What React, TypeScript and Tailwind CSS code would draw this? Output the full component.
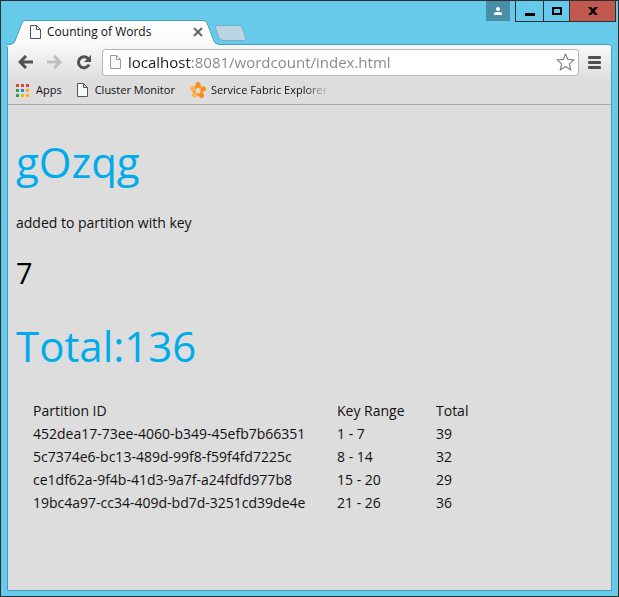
import React from "react";

const rows = [
  ["452dea17-73ee-4060-b349-45efb7b66351", "1 - 7", "39"],
  ["5c7374e6-bc13-489d-99f8-f59f4fd7225c", "8 - 14", "32"],
  ["ce1df62a-9f4b-41d3-9a7f-a24fdfd977b8", "15 - 20", "29"],
  ["19bc4a97-cc34-409d-bd7d-3251cd39de4e", "21 - 26", "36"],
];

const appColours = ["#e84235", "#e84235", "#e84235", "#2ba24c", "#1a86f0", "#fbb40a", "#2ba24c", "#fbb40a", "#fbb40a"];

function PageIcon({ stroke }: { stroke: string }) {
  return (
    <svg width="11" height="14" viewBox="0 0 11 14" fill="#f8f8f8" stroke={stroke} className="shrink-0" aria-hidden="true">
      <path d="M.5.5h6l4 4v9H.5zM6.5.5v4h4" />
    </svg>
  );
}

function TitleBar() {
  return (
    <header className="flex h-[43px] items-start justify-between pl-[6px] pr-[2px]">
      <div className="flex self-end">
        <div className="relative flex h-6 w-[212px] items-center pl-[23px] pr-[16px]">
          <svg className="absolute left-0 top-0" width="212" height="26" viewBox="0 0 212 26" aria-hidden="true">
            <defs>
              <linearGradient id="tab" x1="0" y1="0" x2="0" y2="1">
                <stop offset="0" stopColor="#ffffff" />
                <stop offset="1" stopColor="#f8f8f8" />
              </linearGradient>
            </defs>
            <path
              d="M0 26V24.500H3Q7 24 8 21L15 3Q16 .5 19 .5H196Q199 .5 200 3L207 21Q208 24 212 24.500V26Z"
              fill="url(#tab)"
            />
            <path
              d="M0 24.500H3Q7 24 8 21L15 3Q16 .5 19 .5H196Q199 .5 200 3L207 21Q208 24 212 24.500"
              fill="none"
              stroke="#4a9db8"
            />
          </svg>
          <div className="relative flex min-w-0 grow items-center gap-[6px]">
            <PageIcon stroke="#555555" />
            <span className="grow whitespace-nowrap text-[12px] leading-4">Counting of Words</span>
            <button aria-label="Close tab" className="flex">
              <svg width="10" height="10" viewBox="0 0 10 10" stroke="#666666" strokeWidth="2" aria-hidden="true">
                <path d="m1 1 8 8M9 1 1 9" />
              </svg>
            </button>
          </div>
        </div>
        <button aria-label="New tab" className="-ml-[5px] mt-[5px] flex self-start">
          <svg width="33" height="16" viewBox="0 0 33 16" fill="#bcd5e3" stroke="#71b1ca" aria-hidden="true">
            <path d="M3 .5h22q2 0 3 2l4 11q.5 2-2 2H9q-3 0-4-3L1.500 3q-.5-2.500 1.500-2.500Z" />
          </svg>
        </button>
      </div>
      <div className="flex items-start">
        <button aria-label="Profile" className="mr-[5px] flex h-5 w-6 items-center justify-center bg-[#488ea5]">
          <svg width="8" height="8" viewBox="0 0 8 8" fill="#ffffff" aria-hidden="true">
            <circle cx="4" cy="2" r="2" />
            <path d="M0 8V7q0-2 2-2h4q2 0 2 2v1Z" />
          </svg>
        </button>
        <div className="flex h-[21px] divide-x divide-[#2d3033] border-x border-b border-[#2d3033]">
          <button aria-label="Minimise" className="flex w-[28px] items-center justify-center">
            <svg width="10" height="10" viewBox="0 0 10 10" aria-hidden="true">
              <path d="M0 7h10v3H0z" />
            </svg>
          </button>
          <button aria-label="Maximise" className="flex w-[26px] items-center justify-center">
            <svg width="10" height="8" viewBox="0 0 10 8" fill="none" stroke="#000000" strokeWidth="2" aria-hidden="true">
              <path d="M1 1h8v6H1z" />
            </svg>
          </button>
          <button aria-label="Close window" className="flex w-[45px] items-center justify-center bg-[#c2594f]">
            <svg width="10" height="8" viewBox="0 0 10 8" aria-hidden="true">
              <path d="M0 0h3l2 2 2-2h3L6.500 4 10 8H7L5 6 3 8H0l3.500-4Z" />
            </svg>
          </button>
        </div>
      </div>
    </header>
  );
}

function Toolbar() {
  return (
    <div className="flex h-[34px] items-center gap-[14px] px-[10px]">
      <button aria-label="Back" className="flex">
        <svg width="15" height="14" viewBox="0 0 15 14" fill="none" stroke="#505050" strokeWidth="3" aria-hidden="true">
          <path d="M8 1 2 7l6 6M2.500 7H15" />
        </svg>
      </button>
      <button aria-label="Forward" className="flex">
        <svg width="15" height="14" viewBox="0 0 15 14" fill="none" stroke="#bfbfbf" strokeWidth="3" aria-hidden="true">
          <path d="m7 1 6 6-6 6M12.500 7H0" />
        </svg>
      </button>
      <button aria-label="Reload" className="flex">
        <svg width="16" height="15" viewBox="0 0 16 15" fill="none" stroke="#505050" strokeWidth="3" aria-hidden="true">
          <path d="M12 3.500A5.500 5.500 0 1 0 13 9.500" />
          <path d="M15 0v7H8Z" fill="#505050" stroke="none" />
        </svg>
      </button>
      <div className="-ml-[4px] flex h-[27px] min-w-0 grow items-center rounded-[3px] border border-[#b5b5b5] bg-white pl-[7px] pr-[3px]">
        <PageIcon stroke="#9a9a9a" />
        <input
          aria-label="Address"
          defaultValue="localhost:8081/wordcount/index.html"
          className="ml-[7px] h-6 min-w-0 grow bg-[linear-gradient(90deg,#1c1c1c_63px,#858585_63px)] bg-clip-text text-[15px] leading-6 text-transparent caret-black outline-none"
        />
        <button aria-label="Bookmark this page" className="flex">
          <svg width="19" height="18" viewBox="0 0 19 18" fill="#ffffff" stroke="#858585" strokeWidth="1.200" strokeLinejoin="round" aria-hidden="true">
            <path d="m9.500 1 2.300 5.400 6.200.5-4.700 4 1.500 6-5.300-3.300L4.200 17l1.500-6.100L1 6.900l6.200-.5Z" />
          </svg>
        </button>
      </div>
      <button aria-label="Menu" className="-ml-[5px] flex">
        <svg width="13" height="13" viewBox="0 0 13 13" fill="#505050" aria-hidden="true">
          <rect width="13" height="3" rx="1" />
          <rect y="5" width="13" height="3" rx="1" />
          <rect y="10" width="13" height="3" rx="1" />
        </svg>
      </button>
    </div>
  );
}

function Bookmarks() {
  return (
    <nav className="flex h-[26px] items-center gap-[15px] border-b border-[#a8a8a8] pb-[3px] pl-2 text-[11px] leading-4">
      <a href="#apps" className="flex items-center gap-[7px]">
        <svg width="13" height="13" viewBox="0 0 13 13" aria-hidden="true">
          {appColours.map((c, i) => (
            <rect key={i} x={(i % 3) * 5} y={Math.floor(i / 3) * 5} width="3" height="3" fill={c} />
          ))}
        </svg>
        Apps
      </a>
      <a href="#cluster" className="flex items-center gap-[7px] whitespace-nowrap">
        <PageIcon stroke="#555555" />
        Cluster Monitor
      </a>
      <a href="#explorer" className="flex items-center gap-[5px] whitespace-nowrap">
        <svg width="16" height="16" viewBox="0 0 16 16" aria-hidden="true">
          <path d="M3.500 7 8 3.500 12.500 7 11 12.500H5Z" fill="none" stroke="#fb9a2c" strokeWidth="3" />
          <g fill="#fb8c1a">
            <circle cx="8" cy="2.500" r="2.500" />
            <circle cx="13.500" cy="7" r="2.500" />
            <circle cx="11.500" cy="13.500" r="2.500" />
          </g>
          <g fill="#fdb55c">
            <circle cx="4.500" cy="13" r="2.500" />
            <circle cx="2.500" cy="6.500" r="2.500" />
          </g>
        </svg>
        <span className="bg-[linear-gradient(90deg,#111111_80%,#11111122)] bg-clip-text text-transparent">
          Service Fabric Explorer
        </span>
      </a>
    </nav>
  );
}

export default function App() {
  return (
    <div className="flex min-h-screen flex-col border border-[#2d3033] bg-[#66caea] font-['Open_Sans','Noto_Sans',sans-serif] text-[#111111]">
      <TitleBar />
      <div className="mx-[6px] mb-[5px] flex grow flex-col rounded-t-[4px] border border-[#4a9db8] bg-[#dddddd]">
        <div className="rounded-t-[3px] bg-linear-to-b from-[#f8f8f8] to-[#dddddd] to-60%">
          <Toolbar />
          <Bookmarks />
        </div>
        <main className="px-2 pt-[27px] text-[14px] leading-5">
          <h1 className="text-[42px] leading-[60px] text-[#00abec]">gOzqg</h1>
          <p className="mt-[21px]">added to partition with key</p>
          <p className="mt-5 text-[29px] leading-10 text-black">7</p>
          <h1 className="mt-[23px] text-[42px] leading-[60px] text-[#00abec]">Total:136</h1>
          <table className="ml-[17px] mt-[23px] text-left leading-[23px]">
            <thead>
              <tr>
                <th className="w-[304px] p-0 font-normal">Partition ID</th>
                <th className="w-[99px] p-0 font-normal">Key Range</th>
                <th className="p-0 font-normal">Total</th>
              </tr>
            </thead>
            <tbody>
              {rows.map(([id, range, total]) => (
                <tr key={id}>
                  <td className="p-0">{id}</td>
                  <td className="p-0">{range}</td>
                  <td className="p-0">{total}</td>
                </tr>
              ))}
            </tbody>
          </table>
        </main>
      </div>
    </div>
  );
}
